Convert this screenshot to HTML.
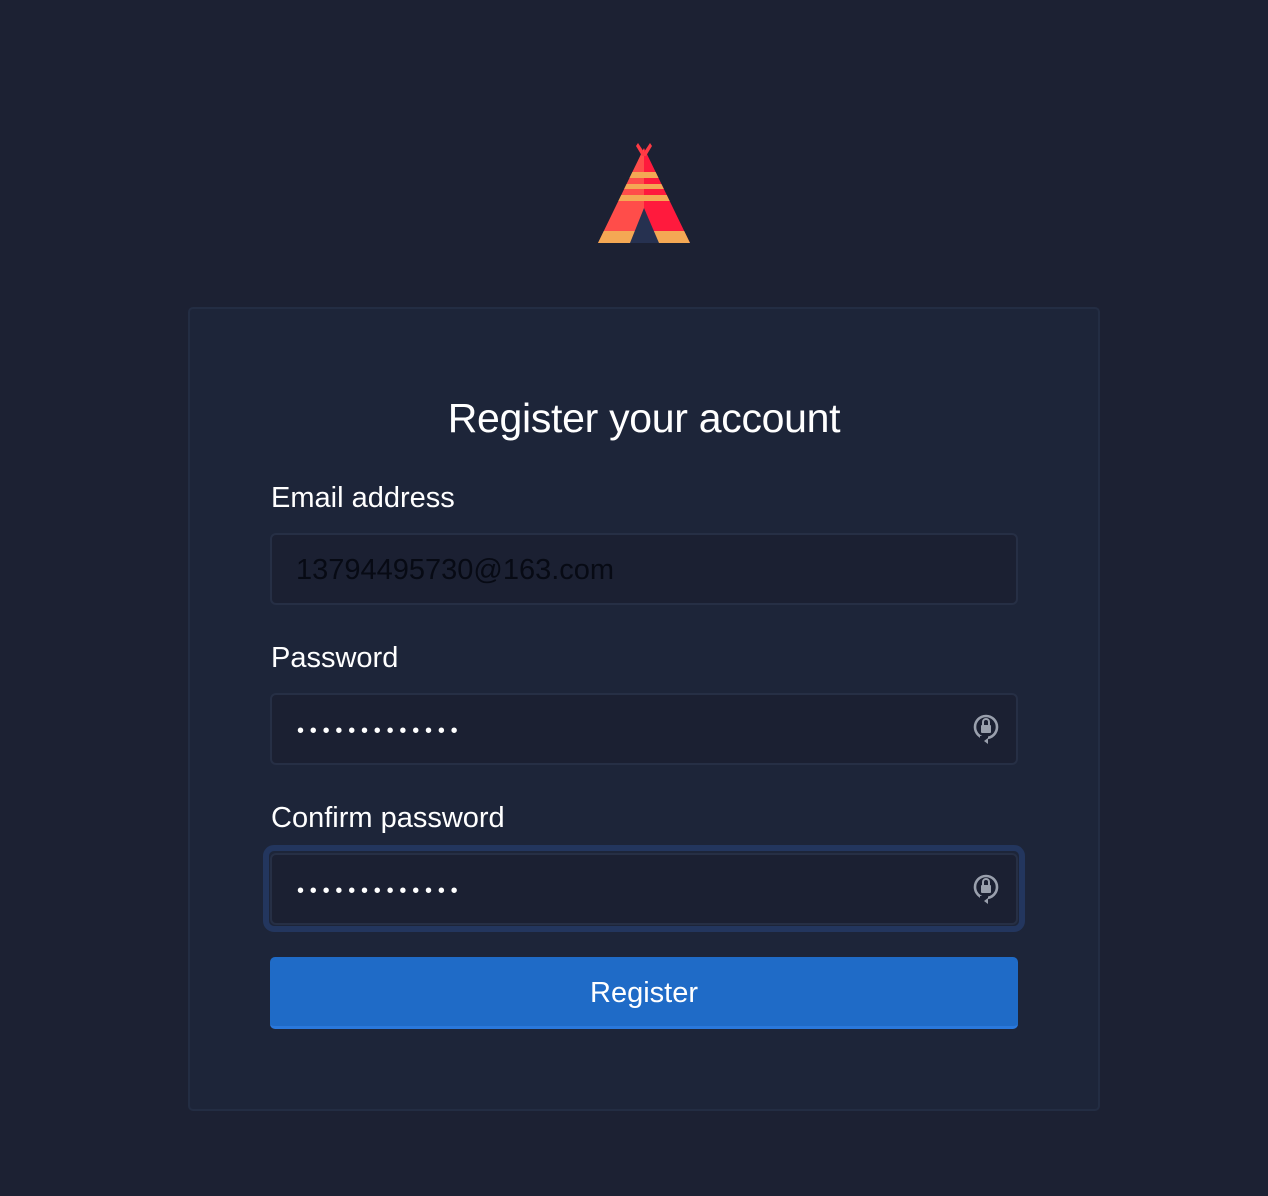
<!DOCTYPE html>
<html><head><meta charset="utf-8"><style>
*{box-sizing:border-box;margin:0;padding:0}
html,body{width:1268px;height:1196px;background:#1c2133;font-family:"Liberation Sans",sans-serif;color:#fff;overflow:hidden}
.card{position:absolute;left:188px;top:307px;width:912px;height:804px;background:#1d2539;border:2px solid #232d43;border-radius:5px}
h1{position:absolute;left:188px;width:912px;top:395px;text-align:center;font-weight:400;font-size:41px;letter-spacing:-0.3px}
.lbl{position:absolute;left:271px;font-size:29px}
.inp{position:absolute;left:270px;width:748px;height:72px;background:#1b2032;border:2px solid #262f45;border-radius:6px}
.val{position:absolute;left:296px;font-size:29px;color:#070a14}
.dots{position:absolute;left:297px;font-size:20px;letter-spacing:5.8px;color:#fff}
.focus{position:absolute;left:263px;top:845px;width:762px;height:87px;border:6px solid #23365e;border-radius:11px}
.btn{position:absolute;left:270px;top:957px;width:748px;height:72px;background:#1f6bc7;border-radius:5px;border-bottom:3px solid #2a78dc;text-align:center;line-height:72px;font-size:29px}
.ic{position:absolute;left:972px}
</style></head><body>
<svg style="position:absolute;left:0;top:0" width="1268" height="300">
<defs><clipPath id="t"><polygon points="644,148 598,243 690,243"/></clipPath></defs>
<g clip-path="url(#t)">
<rect x="590" y="140" width="54" height="110" fill="#ff4d4a"/>
<rect x="644" y="140" width="50" height="110" fill="#ff1a3d"/>
<rect x="590" y="172" width="110" height="6" fill="#f4a854"/>
<rect x="590" y="184" width="110" height="5" fill="#f4a854"/>
<rect x="590" y="195" width="110" height="6" fill="#f4a854"/>
<rect x="590" y="231" width="110" height="12" fill="#f4a854"/>
</g>
<polygon points="638,143 644,152 650,143 652,146 646,156 642,156 636,146" fill="#ff3a44"/>
<polygon points="644,208 630,243 659,243" fill="#263150"/>
</svg>
<div class="card"></div>
<h1>Register your account</h1>
<div class="lbl" style="top:482px">Email address</div>
<div class="inp" style="top:533px"></div>
<div class="val" style="top:554px">13794495730@163.com</div>
<div class="lbl" style="top:642px">Password</div>
<div class="inp" style="top:693px"></div>
<div class="dots" style="top:720px">•••••••••••••</div>
<svg class="ic" style="top:711px" width="28" height="36" viewBox="0 0 28 36"><circle cx="14" cy="16" r="11" fill="none" stroke="#9aa0ad" stroke-width="2.6"/><rect x="9" y="14" width="10" height="8" rx="1" fill="#9aa0ad"/><path d="M11 14v-3a3 3 0 0 1 6 0v3" fill="none" stroke="#9aa0ad" stroke-width="2"/><rect x="8" y="25" width="8" height="6" fill="#1b2032"/><path d="M16 27l-4 3 4 3z" fill="#9aa0ad"/></svg>
<div class="lbl" style="top:802px">Confirm password</div>
<div class="focus"></div>
<div class="inp" style="top:853px"></div>
<div class="dots" style="top:880px">•••••••••••••</div>
<svg class="ic" style="top:871px" width="28" height="36" viewBox="0 0 28 36"><circle cx="14" cy="16" r="11" fill="none" stroke="#9aa0ad" stroke-width="2.6"/><rect x="9" y="14" width="10" height="8" rx="1" fill="#9aa0ad"/><path d="M11 14v-3a3 3 0 0 1 6 0v3" fill="none" stroke="#9aa0ad" stroke-width="2"/><rect x="8" y="25" width="8" height="6" fill="#1b2032"/><path d="M16 27l-4 3 4 3z" fill="#9aa0ad"/></svg>
<div class="btn">Register</div>
</body></html>
